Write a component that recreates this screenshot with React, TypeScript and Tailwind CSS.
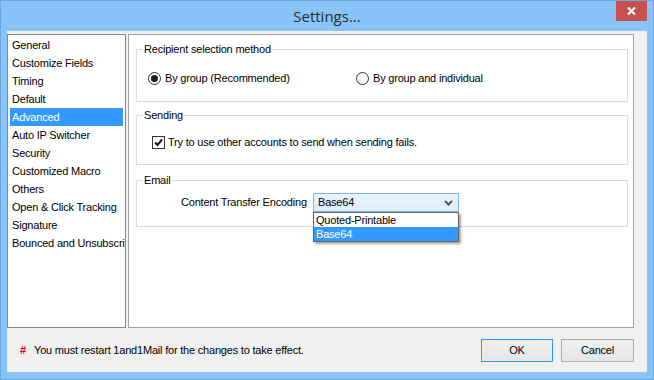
const items = [
  'General',
  'Customize Fields',
  'Timing',
  'Default',
  'Advanced',
  'Auto IP Switcher',
  'Security',
  'Customized Macro',
  'Others',
  'Open & Click Tracking',
  'Signature',
  'Bounced and Unsubscribe',
];

const font = { fontFamily: '"Liberation Sans", Arial, sans-serif' };

const GroupBox = ({ label, className, children }: { label: string; className: string; children: React.ReactNode }) => (
  <div className={`relative border border-[#dcdcdc] ${className}`}>
    <span className="absolute -top-[8px] left-[6px] bg-white px-[1px] leading-[14px]">{label}</span>
    {children}
  </div>
);

const Radio = ({ checked }: { checked?: boolean }) => (
  <span className="flex h-[13px] w-[13px] items-center justify-center rounded-full border border-[#333] bg-white">
    {checked && <span className="h-[7px] w-[7px] rounded-full bg-[#1c1c1c]" />}
  </span>
);

export default function App() {
  return (
    <div
      className="flex h-[380px] w-[654px] flex-col border border-[#6ea8dc] bg-[#88c4f7] text-[11px] tracking-[-0.2px] text-black"
      style={font}
    >
      {/* Title bar */}
      <div className="relative flex h-[30px] shrink-0 items-center justify-center">
        <span className="text-[15px] tracking-normal text-[#2b2b2b]" style={{ fontFamily: '"Open Sans", sans-serif' }}>
          Settings...
        </span>
        <div className="absolute right-[6px] top-0 flex h-[20px] w-[31px] items-center justify-center bg-[#c75050]">
          <svg width="9" height="8" viewBox="0 0 9 8">
            <path d="M1 0.5 L8 7.5 M8 0.5 L1 7.5" stroke="#fff" strokeWidth="2" />
          </svg>
        </div>
      </div>

      {/* Client */}
      <div className="mx-[6px] mb-[7px] flex flex-1 flex-col bg-[#f0f0f0]">
        <div className="flex h-[297px] gap-[2px] pt-[3px] pr-[13px]">
          {/* Left list */}
          <div className="w-[119px] overflow-hidden border border-[#828790] bg-white px-[2px] pt-[1px]">
            {items.map((it) => (
              <div
                key={it}
                className={`h-[18px] whitespace-nowrap pl-[2px] leading-[18px] ${
                  it === 'Advanced' ? 'bg-[#3399ff] text-white' : ''
                }`}
              >
                {it}
              </div>
            ))}
          </div>

          {/* Right panel */}
          <div className="flex-1 border border-[#a0a0a0] bg-white pl-[7px] pr-[5px] pt-[14px]">
            <GroupBox label="Recipient selection method" className="h-[53px]">
              <div className="flex items-center pt-[20px] pl-[11px]">
                <Radio checked />
                <span className="ml-[4px] w-[191px]">By group (Recommended)</span>
                <Radio />
                <span className="ml-[4px]">By group and individual</span>
              </div>
            </GroupBox>

            <GroupBox label="Sending" className="mt-[13px] h-[50px]">
              <div className="flex items-center pt-[18px] pl-[15px]">
                <span className="flex h-[13px] w-[13px] items-center justify-center border border-[#333] bg-white">
                  <svg width="9" height="9" viewBox="0 0 9 9">
                    <path d="M1 4.5 L3.5 7 L8 1.5" fill="none" stroke="#111" strokeWidth="2" />
                  </svg>
                </span>
                <span className="ml-[3px]">Try to use other accounts to send when sending fails.</span>
              </div>
            </GroupBox>

            <GroupBox label="Email" className="mt-[15px] h-[47px]">
              <div className="flex items-center pt-[12px] pl-[44px]">
                <span className="w-[132px]">Content Transfer Encoding</span>
                <div className="relative">
                  <div className="flex h-[19px] w-[146px] items-center justify-between border border-[#7eb4ea] bg-gradient-to-b from-[#ecf4fc] to-[#dcecfc] pl-[4px] pr-[5px]">
                    <span>Base64</span>
                    <svg width="9" height="6" viewBox="0 0 9 6">
                      <path d="M1 1 L4.5 4.5 L8 1" fill="none" stroke="#555" strokeWidth="2" />
                    </svg>
                  </div>
                  <div className="absolute left-0 top-[19px] z-10 w-[146px] border border-[#646464] bg-white shadow-[2px_2px_2px_rgba(0,0,0,0.35)]">
                    <div className="h-[14px] pl-[2px] leading-[14px]">Quoted-Printable</div>
                    <div className="h-[14px] bg-[#3399ff] pl-[2px] leading-[14px] text-white">Base64</div>
                  </div>
                </div>
              </div>
            </GroupBox>
          </div>
        </div>

        {/* Footer */}
        <div className="flex flex-1 items-center pl-[13px] pr-[13px]">
          <span className="w-[14px] font-bold text-[#ee0000]">#</span>
          <span>You must restart 1and1Mail for the changes to take effect.</span>
          <div className="ml-auto flex gap-[8px] pt-[1px]">
            <button className="h-[23px] w-[72px] border border-[#3399ff] bg-gradient-to-b from-[#f0f0f0] to-[#e5e5e5]">
              OK
            </button>
            <button className="h-[23px] w-[73px] border border-[#adadad] bg-gradient-to-b from-[#f0f0f0] to-[#e5e5e5]">
              Cancel
            </button>
          </div>
        </div>
      </div>
    </div>
  );
}
